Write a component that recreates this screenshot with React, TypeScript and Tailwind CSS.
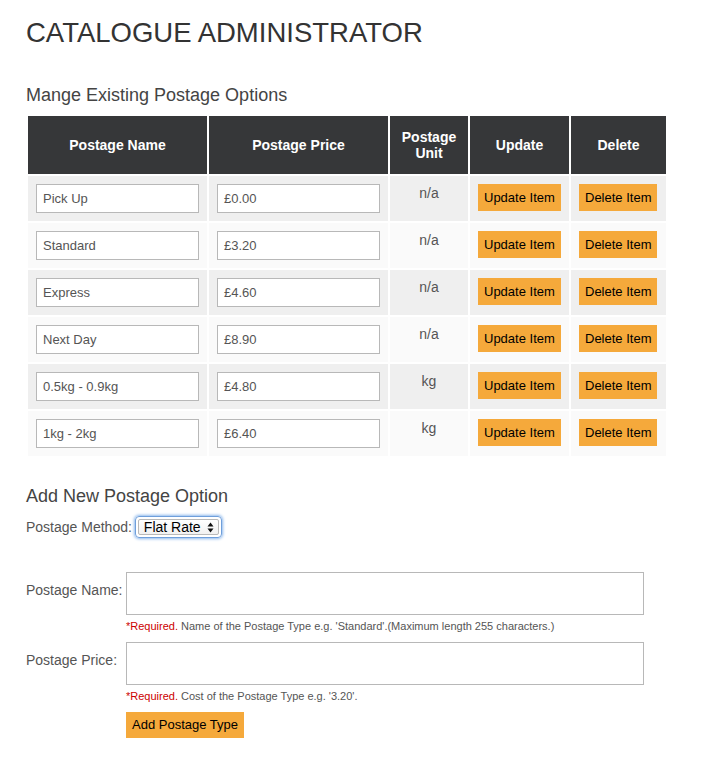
import React from "react";

const rows = [
  { name: "Pick Up", price: "£0.00", unit: "n/a" },
  { name: "Standard", price: "£3.20", unit: "n/a" },
  { name: "Express", price: "£4.60", unit: "n/a" },
  { name: "Next Day", price: "£8.90", unit: "n/a" },
  { name: "0.5kg - 0.9kg", price: "£4.80", unit: "kg" },
  { name: "1kg - 2kg", price: "£6.40", unit: "kg" },
];

function Btn({ children }: { children: React.ReactNode }) {
  return (
    <div className="inline-flex h-[27px] items-center bg-[#f5a93b] px-[6px] text-[13px] text-black">
      {children}
    </div>
  );
}

function TInput({ value }: { value: string }) {
  return (
    <div className="flex h-[29px] w-full items-center border border-[#b8b8b8] bg-white pl-[6px] text-[13px] text-[#555]">
      {value}
    </div>
  );
}

export default function App() {
  return (
    <div
      className="min-h-[762px] bg-white pl-[26px] pt-[16px] text-[#555]"
      style={{ fontFamily: '"Liberation Sans", Arial, Helvetica, sans-serif' }}
    >
      <h1 className="text-[27.5px] leading-[34px] text-[#333]">CATALOGUE ADMINISTRATOR</h1>
      <h2 className="mt-[34px] text-[18px] leading-[22px] text-[#444]">Mange Existing Postage Options</h2>
      <table className="mt-[8px] w-[642px] table-fixed border-separate border-spacing-[2px]">
        <colgroup>
          <col className="w-[179px]" />
          <col className="w-[179px]" />
          <col className="w-[78px]" />
          <col className="w-[99px]" />
          <col className="w-[95px]" />
        </colgroup>
        <thead>
          <tr className="h-[58px] bg-[#363739] text-[14px] font-bold leading-[16px] text-white">
            <th className="px-[6px]">Postage Name</th>
            <th className="px-[6px]">Postage Price</th>
            <th className="px-[6px]">Postage Unit</th>
            <th className="px-[6px]">Update</th>
            <th className="px-[6px]">Delete</th>
          </tr>
        </thead>
        <tbody>
          {rows.map((r, i) => (
            <tr key={r.name} className={i % 2 === 0 ? "h-[45px] bg-[#efefef]" : "h-[45px] bg-[#fafafa]"}>
              <td className="px-[8px] pb-[8px] pt-[8px] align-top">
                <TInput value={r.name} />
              </td>
              <td className="px-[8px] pb-[8px] pt-[8px] align-top">
                <TInput value={r.price} />
              </td>
              <td className="px-[8px] pt-[7px] text-center align-top text-[14px] leading-[20px] text-[#555]">
                {r.unit}
              </td>
              <td className="px-[8px] pt-[8px] align-top">
                <Btn>Update Item</Btn>
              </td>
              <td className="px-[8px] pt-[8px] align-top">
                <Btn>Delete Item</Btn>
              </td>
            </tr>
          ))}
        </tbody>
      </table>

      <h3 className="mt-[27px] text-[18px] leading-[22px] text-[#444]">Add New Postage Option</h3>
      <div className="mt-[9px] flex items-center text-[14px]">
        <span className="mr-[3px]">Postage Method:</span>
        <div className="flex h-[22px] w-[87px] items-center rounded-[4px] border border-[#6f9fdb] p-[2px] shadow-[0_0_3px_1px_#8db8ec]">
          <div className="flex h-full w-full items-center justify-between rounded-[2px] border border-[#b9b9b9] bg-gradient-to-b from-white to-[#f1f1f1] pl-[5px] pr-[4px] text-[14px] text-black">
            <span>Flat Rate</span>
            <svg width="7" height="11" viewBox="0 0 7 11">
              <path d="M3.5 0.5 L6.5 4.5 L0.5 4.5 Z" fill="#111" />
              <path d="M0.5 6.5 L6.5 6.5 L3.5 10.5 Z" fill="#111" />
            </svg>
          </div>
        </div>
      </div>

      <div className="mt-[34px] flex items-start text-[14px]">
        <span className="w-[100px] pt-[10px] leading-[16px]">Postage Name:</span>
        <div className="h-[43px] w-[518px] border border-[#b8b8b8] bg-white" />
      </div>
      <div className="ml-[100px] mt-[4px] text-[11px] leading-[14px] text-[#555]">
        <span className="text-[#c00]">*Required.</span> Name of the Postage Type e.g. 'Standard'.(Maximum length 255 characters.)
      </div>

      <div className="mt-[9px] flex items-start text-[14px]">
        <span className="w-[100px] pt-[10px] leading-[16px]">Postage Price:</span>
        <div className="h-[43px] w-[518px] border border-[#b8b8b8] bg-white" />
      </div>
      <div className="ml-[100px] mt-[4px] text-[11px] leading-[14px] text-[#555]">
        <span className="text-[#c00]">*Required.</span> Cost of the Postage Type e.g. '3.20'.
      </div>

      <div className="ml-[100px] mt-[9px]">
        <div className="inline-flex h-[26px] items-center bg-[#f5a93b] px-[6px] text-[13px] text-black">
          Add Postage Type
        </div>
      </div>
    </div>
  );
}
